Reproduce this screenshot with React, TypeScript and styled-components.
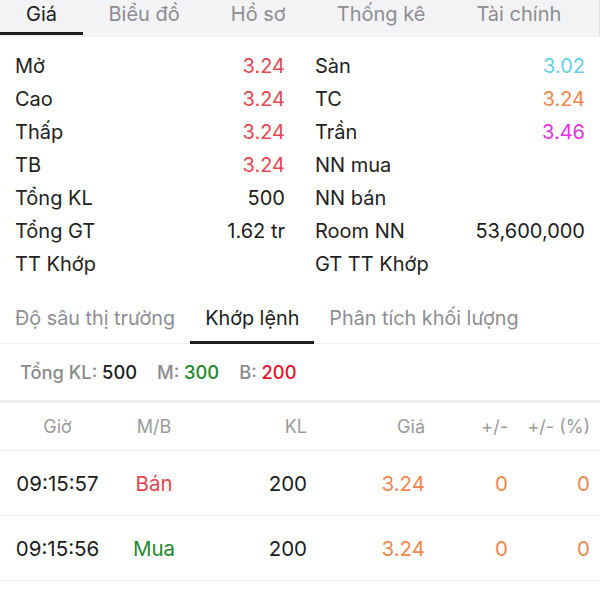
import React from "react";
import styled, { createGlobalStyle } from "styled-components";

const GlobalStyle = createGlobalStyle`
  html, body {
    margin: 0;
    padding: 0;
    background: #ffffff;
  }
  body {
    font-family: Inter, "Noto Sans", sans-serif;
    color: #222;
  }
`;

type Tone = "red" | "cyan" | "orange" | "magenta" | "green" | "dark";

const toneColors: Record<Tone, string> = {
  red: "#e4474f",
  cyan: "#5fd0e6",
  orange: "#f0874d",
  magenta: "#e62ee6",
  green: "#1d8a2c",
  dark: "#1c1c1c",
};

const leftStats: { label: string; value?: string; tone?: Tone }[] = [
  { label: "Mở", value: "3.24", tone: "red" },
  { label: "Cao", value: "3.24", tone: "red" },
  { label: "Thấp", value: "3.24", tone: "red" },
  { label: "TB", value: "3.24", tone: "red" },
  { label: "Tổng KL", value: "500", tone: "dark" },
  { label: "Tổng GT", value: "1.62 tr", tone: "dark" },
  { label: "TT Khớp" },
];

const rightStats: { label: string; value?: string; tone?: Tone }[] = [
  { label: "Sàn", value: "3.02", tone: "cyan" },
  { label: "TC", value: "3.24", tone: "orange" },
  { label: "Trần", value: "3.46", tone: "magenta" },
  { label: "NN mua" },
  { label: "NN bán" },
  { label: "Room NN", value: "53,600,000", tone: "dark" },
  { label: "GT TT Khớp" },
];

const trades = [
  { time: "09:15:57", side: "Bán", sideTone: "red" as Tone, vol: "200", price: "3.24", change: "0", pct: "0" },
  { time: "09:15:56", side: "Mua", sideTone: "green" as Tone, vol: "200", price: "3.24", change: "0", pct: "0" },
];

const App = () => {
  return (
    <Page>
      <GlobalStyle />
      <TopTabs>
        {["Giá", "Biểu đồ", "Hồ sơ", "Thống kê", "Tài chính"].map((t, i) => (
          <TopTab key={t} active={i === 0}>
            {t}
          </TopTab>
        ))}
      </TopTabs>

      <StatsGrid>
        {[leftStats, rightStats].map((col, ci) => (
          <StatsColumn key={ci}>
            {col.map((s) => (
              <StatRow key={s.label}>
                <StatLabel>{s.label}</StatLabel>
                {s.value && <StatValue tone={s.tone || "dark"}>{s.value}</StatValue>}
              </StatRow>
            ))}
          </StatsColumn>
        ))}
      </StatsGrid>

      <SubTabs>
        {["Độ sâu thị trường", "Khớp lệnh", "Phân tích khối lượng"].map((t, i) => (
          <SubTab key={t} active={i === 1}>
            {t}
          </SubTab>
        ))}
      </SubTabs>

      <Summary>
        <SummaryItem>
          <SummaryLabel>Tổng KL: </SummaryLabel>
          <SummaryValue tone="dark">500</SummaryValue>
        </SummaryItem>
        <SummaryItem>
          <SummaryLabel>M: </SummaryLabel>
          <SummaryValue tone="green">300</SummaryValue>
        </SummaryItem>
        <SummaryItem>
          <SummaryLabel>B: </SummaryLabel>
          <SummaryValue tone="red">200</SummaryValue>
        </SummaryItem>
      </Summary>

      <TableHead>
        <HeadCell align="center">Giờ</HeadCell>
        <HeadCell align="center">M/B</HeadCell>
        <HeadCell align="right">KL</HeadCell>
        <HeadCell align="right">Giá</HeadCell>
        <HeadCell align="right">+/-</HeadCell>
        <HeadCell align="right">+/- (%)</HeadCell>
      </TableHead>

      {trades.map((t) => (
        <TableRow key={t.time}>
          <Cell align="center" tone="dark">{t.time}</Cell>
          <Cell align="center" tone={t.sideTone}>{t.side}</Cell>
          <Cell align="right" tone="dark">{t.vol}</Cell>
          <Cell align="right" tone="orange">{t.price}</Cell>
          <Cell align="right" tone="orange">{t.change}</Cell>
          <Cell align="right" tone="orange">{t.pct}</Cell>
        </TableRow>
      ))}
    </Page>
  );
};

export default App;

const Page = styled.div`
  width: 600px;
  min-height: 600px;
  background: #fff;
`;

const TopTabs = styled.div`
  display: flex;
  background: #f3f3f5;
  padding-bottom: 2px;
  border-right: 1px solid #e2e2e4;
`;

const TopTab = styled.div<{ active: boolean }>`
  box-sizing: border-box;
  height: 35px;
  padding: 2px 25.5px 0;
  font-size: 20px;
  line-height: 24px;
  color: ${(p) => (p.active ? "#1e1e1e" : "#8d8d92")};
  border-bottom: 3px solid ${(p) => (p.active ? "#1e1e1e" : "transparent")};
  white-space: nowrap;

  &:first-child {
    padding: 2px 26px 0 26px;
  }
`;

const StatsGrid = styled.div`
  display: grid;
  grid-template-columns: 1fr 1fr;
  padding-top: 12px;
`;

const StatsColumn = styled.div`
  display: flex;
  flex-direction: column;
  padding: 0 15px;
`;

const StatRow = styled.div`
  display: flex;
  justify-content: space-between;
  align-items: center;
  height: 33px;
  font-size: 20px;
`;

const StatLabel = styled.span`
  color: #222;
`;

const StatValue = styled.span<{ tone: Tone }>`
  color: ${(p) => toneColors[p.tone]};
`;

const SubTabs = styled.div`
  display: flex;
  margin-top: 14px;
  border-bottom: 1px solid #f0f0f0;
`;

const SubTab = styled.div<{ active: boolean }>`
  box-sizing: border-box;
  height: 50px;
  padding: 0 15px;
  display: flex;
  align-items: center;
  font-size: 19.8px;
  color: ${(p) => (p.active ? "#1e1e1e" : "#8d8d92")};
  border-bottom: 3px solid ${(p) => (p.active ? "#1e1e1e" : "transparent")};
  margin-bottom: -1px;
  white-space: nowrap;
`;

const Summary = styled.div`
  display: flex;
  align-items: center;
  gap: 20px;
  height: 56px;
  padding-left: 20px;
  border-bottom: 3px solid #efefef;
  font-size: 18.3px;
  font-weight: 500;
`;

const SummaryItem = styled.div`
  white-space: pre;
`;

const SummaryLabel = styled.span`
  color: #8b8b8b;
`;

const SummaryValue = styled.span<{ tone: Tone }>`
  color: ${(p) => (p.tone === "red" ? "#e8112d" : toneColors[p.tone])};
`;

const tableColumns = "115px 78px 114px 118px 83px 82px";

const TableHead = styled.div`
  display: grid;
  grid-template-columns: ${tableColumns};
  align-items: center;
  height: 47px;
  border-bottom: 1px solid #f0f0f0;
  font-size: 18px;
  color: #9b9b9b;
`;

const HeadCell = styled.div<{ align: "center" | "right" }>`
  text-align: ${(p) => p.align};
`;

const TableRow = styled.div`
  display: grid;
  grid-template-columns: ${tableColumns};
  align-items: center;
  height: 64px;
  border-bottom: 1px solid #f0f0f0;
  font-size: 20.5px;
`;

const Cell = styled.div<{ align: "center" | "right"; tone: Tone }>`
  text-align: ${(p) => p.align};
  color: ${(p) => toneColors[p.tone]};
`;
